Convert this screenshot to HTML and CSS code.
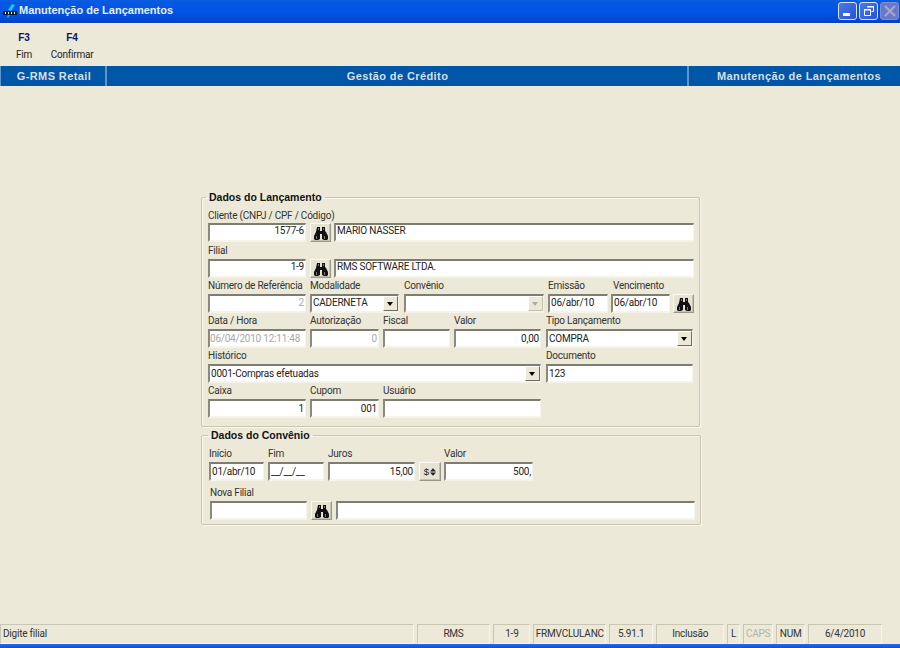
FILE: index.html
```html
<!DOCTYPE html>
<html lang="pt">
<head>
<meta charset="utf-8">
<title>Manutenção de Lançamentos</title>
<link rel="stylesheet" href="styles.css">
</head>
<body>
<svg class="defs" width="0" height="0">
  <symbol id="bino" viewBox="0 0 16 14">
    <path fill="#111" d="M4 1h3v4h2V1h3v4l1 1 2 4v3l-1 1h-3l-2-1V8H7v5l-2 1H2l-1-1v-3l2-4z"/>
    <path fill="#7a7a6e" d="M3 10h1v3H3zM11 10h1v3h-1zM5 2h1v2H5zM10 2h1v2h-1z"/>
  </symbol>
</svg>
<div class="app">
  <header class="titlebar">
    <svg class="appicon" viewBox="0 0 16 16" width="16" height="16">
      <path fill="#16d0d8" d="M10 1l3 1-4 6-3-1z"/>
      <path fill="#0a1a3a" d="M1 8h14v4H1z"/>
      <path fill="#e8f0ff" d="M3 9h1v2H3zM6 9h1v2H6zM9 9h1v2H9zM12 9h1v2h-1z"/>
      <path fill="#16c0d8" d="M6 12l2 0-2 3-1-1z"/>
    </svg>
    <span class="titletext">Manutenção de Lançamentos</span>
    <div class="winbtns">
      <span class="winbtn"><i class="min"></i></span>
      <span class="winbtn"><svg viewBox="0 0 14 14" width="14" height="14"><path fill="none" stroke="#fff" d="M5.500 2.500h6v5h-2M2.500 5.500h6v6h-6z"/><path stroke="#fff" d="M5 3h7M2 6h7"/></svg></span>
      <span class="winbtn off"><svg viewBox="0 0 14 14" width="14" height="14"><path stroke="#a8a8d0" stroke-width="2" d="M2 2l10 10M12 2L2 12"/></svg></span>
    </div>
  </header>

  <nav class="toolbar">
    <div class="tool t1"><b>F3</b><span>Fim</span></div>
    <div class="tool t2"><b>F4</b><span>Confirmar</span></div>
  </nav>

  <div class="banner">
    <div class="b-left">G-RMS Retail</div>
    <div class="b-mid">Gestão de Crédito</div>
    <div class="b-right">Manutenção de Lançamentos</div>
  </div>

  <main class="main">
    <fieldset class="group g1">
      <legend>Dados do Lançamento</legend>
      <div class="row r-first up2">
        <div class="field w98"><label class="lab-down">Cliente (CNPJ / CPF / Código)</label><div class="box right">1577-6</div></div>
        <button class="btn w21"><svg class="ic"><use href="#bino"/></svg></button>
        <div class="field grow m-l"><label></label><div class="box">MARIO NASSER</div></div>
      </div>
      <div class="row up2">
        <div class="field w98"><label>Filial</label><div class="box right">1-9</div></div>
        <button class="btn w21"><svg class="ic"><use href="#bino"/></svg></button>
        <div class="field grow m-l"><label></label><div class="box">RMS SOFTWARE LTDA.</div></div>
      </div>
      <div class="row up1">
        <div class="field w98"><label>Número de Referência</label><div class="box right dim">2</div></div>
        <div class="field w89"><label>Modalidade</label><div class="box sel">CADERNETA<span class="arrow"></span></div></div>
        <div class="field w140 m-a"><label>Convênio</label><div class="box sel"><span class="arrow off"></span></div></div>
        <div class="field w60"><label>Emissão</label><div class="box">06/abr/10</div></div>
        <div class="field w59 m-s"><label class="lab-in">Vencimento</label><div class="box">06/abr/10</div></div>
        <button class="btn w21 m-s"><svg class="ic"><use href="#bino"/></svg></button>
      </div>
      <div class="row">
        <div class="field w98"><label>Data / Hora</label><div class="box dim date">06/04/2010 12:11:48</div></div>
        <div class="field w69"><label>Autorização</label><div class="box right dim">0</div></div>
        <div class="field w67"><label>Fiscal</label><div class="box"></div></div>
        <div class="field w87"><label>Valor</label><div class="box right">0,00</div></div>
        <div class="field w147 m-w"><label>Tipo Lançamento</label><div class="box sel">COMPRA<span class="arrow"></span></div></div>
      </div>
      <div class="row">
        <div class="field w333"><label>Histórico</label><div class="box sel">0001-Compras efetuadas<span class="arrow"></span></div></div>
        <div class="field w147 m-w"><label>Documento</label><div class="box">123</div></div>
      </div>
      <div class="row">
        <div class="field w98"><label>Caixa</label><div class="box right">1</div></div>
        <div class="field w69"><label>Cupom</label><div class="box right">001</div></div>
        <div class="field w158"><label>Usuário</label><div class="box"></div></div>
      </div>
    </fieldset>

    <fieldset class="group g2">
      <legend>Dados do Convênio</legend>
      <div class="row r-first2">
        <div class="field w55"><label>Início</label><div class="box">01/abr/10</div></div>
        <div class="field w56"><label>Fim</label><div class="box">__/__/__</div></div>
        <div class="field w87"><label>Juros</label><div class="box right">15,00</div></div>
        <button class="btn w22 calc">$<svg class="updown" viewBox="0 0 7 9" width="6" height="8"><path fill="#222" d="M3.500 0L7 4H0zM0 5h7L3.500 9z"/></svg></button>
        <div class="field w89 m-t"><label>Valor</label><div class="box right">500,</div></div>
      </div>
      <div class="row r-second2">
        <div class="field w97"><label>Nova Filial</label><div class="box"></div></div>
        <button class="btn w21"><svg class="ic"><use href="#bino"/></svg></button>
        <div class="field grow"><label></label><div class="box"></div></div>
      </div>
    </fieldset>
  </main>

  <footer class="status">
    <div class="pane p-msg">Digite filial</div>
    <div class="pane p-rms">RMS</div>
    <div class="pane p-fil">1-9</div>
    <div class="pane p-frm">FRMVCLULANC</div>
    <div class="pane p-ver">5.91.1</div>
    <div class="pane p-inc">Inclusão</div>
    <div class="pane p-l">L</div>
    <div class="pane p-caps">CAPS</div>
    <div class="pane p-num">NUM</div>
    <div class="pane p-date">6/4/2010</div>
  </footer>
  <div class="bottomedge"></div>
</div>
</body>
</html>
```
FILE: styles.css
```css
* { box-sizing: border-box; }
html, body { margin: 0; padding: 0; }
body { width: 900px; height: 648px; overflow: hidden; background: #ece9d8; font-family: Roboto, "Liberation Sans", Arial, sans-serif; font-size: 10px; letter-spacing: -0.220px; color: #222; }
.defs { display: block; height: 0; }
.app { width: 900px; height: 648px; display: flex; flex-direction: column; }

.titlebar { height: 23px; flex: none; display: flex; align-items: center; padding: 0 1px 0 2px; border-bottom: 1px solid #0a3fc0; background: linear-gradient(#0a5ee0 0, #0458e2 3px, #0055e5 12px, #0146d0 21px, #0a3fc0 23px); }
.appicon { flex: none; margin-right: 1px; margin-top: -1px; }
.titletext { color: #e8eeff; font-family: "Liberation Sans", sans-serif; font-weight: bold; font-size: 11px; letter-spacing: 0; margin-top: -2px; }
.winbtns { margin-left: auto; display: flex; gap: 2px; margin-top: -1px; }
.winbtn { width: 19px; height: 18px; border: 1px solid #d8e4fa; border-radius: 3px; background: linear-gradient(135deg, #4a7ae8, #2a50d8); display: flex; align-items: center; justify-content: center; position: relative; }
.winbtn .min { display: block; width: 7px; height: 3px; background: #fff; margin-top: 8px; margin-right: 2px; }
.winbtn.off { background: #6a78c8; border-color: #7e8cd2; }

.toolbar { height: 43px; flex: none; display: flex; position: relative; border-top: 1px solid #f4f2e8; }
.tool { display: flex; flex-direction: column; align-items: center; width: 48px; padding-top: 8px; }
.tool b { color: #10106a; font-family: "Liberation Sans", sans-serif; font-size: 10px; letter-spacing: 0; line-height: 12px; height: 17px; }
.tool span { line-height: 12px; color: #222; }

.banner { height: 20px; flex: none; display: flex; background: #0057a8; color: #d8dfe8; font-family: "Liberation Sans", sans-serif; font-weight: bold; font-size: 11px; line-height: 20px; text-align: center; letter-spacing: 0.400px; }
.b-left { width: 107px; padding-left: 2px; border-left: 1px solid #5f95cc; border-right: 2px solid #5f95cc; }
.b-mid { width: 580px; padding-left: 1px; }
.b-right { flex: 1; padding-left: 9px; border-left: 2px solid #5f95cc; }

.main { flex: 1; display: flex; flex-direction: column; padding: 105px 0 0 201px; }
.group { margin: 0; padding: 0 0 0 5px; min-width: 0; border: 1px solid #c9c6b4; border-radius: 2px; box-shadow: inset 1px 1px 0 #f8f6ec, 1px 1px 0 #f8f6ec; }
.group legend { margin-left: -2px; padding: 0 3px; height: 12px; font-family: "Liberation Sans", sans-serif; font-weight: bold; font-size: 10.500px; letter-spacing: 0; line-height: 12px; color: #111; }
.g1 { width: 499px; height: 236px; padding-left: 6px; }
.g2 { width: 500px; height: 96px; margin-top: 2px; padding-left: 7px; }
.g2 legend { margin-left: -1px; }

.row { display: flex; gap: 4px; align-items: flex-end; }
.r-first { margin-top: 4px; margin-bottom: 1px; }
.r-first2 { margin-top: 5px; }
.r-second2 { margin-top: 4px; margin-left: 1px; }

.field { display: flex; flex-direction: column; flex: none; }
.field label { height: 16px; line-height: 15px; white-space: nowrap; color: #333; }
.field label.lab-down { line-height: 17px; }
.field label.lab-in { padding-left: 2px; }
.box { height: 19px; line-height: 15px; padding: 0 1px 0 1px; background: #fff; border-style: solid; border-width: 2px 1px 2px 2px; border-color: #7f7d72 #f6f4ea #f6f4ea #8b897e; white-space: nowrap; overflow: hidden; color: #222; }
.up1 .box { line-height: 14px; }
.up2 .box { line-height: 12px; }
.right { text-align: right; }
.dim { color: #a8a8a8; }
.date { padding-left: 0; }
.sel { position: relative; padding-right: 18px; }
.arrow { position: absolute; top: 0; right: 0; width: 15px; height: 15px; background: #ece9d8; border: 1px solid; border-color: #fff #6e6c62 #6e6c62 #fff; }
.arrow::after { content: ""; position: absolute; left: 3px; top: 5px; border-style: solid; border-width: 4px 3.500px 0; border-color: #000 transparent transparent; }
.arrow.off::after { border-top-color: #b0ae9f; }
.arrow.off { border-color: #fff #c0beaf #c0beaf #fff; }

.btn { flex: none; height: 19px; padding: 0; margin: 0; background: #e6e3d3; border: 1px solid; border-color: #fbfaf4 #9a988c #9a988c #fbfaf4; box-shadow: inset -1px -1px 0 #c4c1b0; display: flex; align-items: center; justify-content: center; font-family: "Liberation Sans", sans-serif; font-size: 9.500px; color: #222; }
.ic { width: 16px; height: 14px; }
.calc { gap: 1px; margin-right: -1px; }
.updown { display: block; }

.grow { flex: 1; margin-right: 5px; }
.m-a { margin-left: 1px; }
.m-l { margin-left: -1px; }
.m-s { margin-left: -1px; }
.m-w { margin-left: 1px; }
.m-t { margin-left: 0; }
.w21 { width: 21px; } .w22 { width: 22px; }
.w55 { width: 55px; } .w56 { width: 56px; } .w59 { width: 59px; } .w60 { width: 60px; }
.w67 { width: 67px; } .w69 { width: 69px; } .w87 { width: 87px; } .w89 { width: 89px; }
.w97 { width: 97px; } .w98 { width: 98px; } .w140 { width: 140px; } .w147 { width: 147px; }
.w158 { width: 158px; } .w333 { width: 333px; }

.status { height: 20px; flex: none; display: flex; gap: 3px; margin-top: auto; padding-right: 18px; }
.pane { line-height: 18px; text-align: center; color: #333; border: 1px solid; border-color: #c9c6b4 #f8f6ec #f8f6ec #c9c6b4; white-space: nowrap; overflow: hidden; }
.p-msg { width: 414px; text-align: left; padding-left: 2px; }
.p-rms { width: 74px; } .p-fil { width: 37px; } .p-frm { width: 73px; } .p-ver { width: 44px; }
.p-inc { width: 68px; } .p-l { width: 13px; } .p-caps { width: 30px; color: #b4b2a4; } .p-num { width: 29px; } .p-date { width: 74px; }
.bottomedge { height: 4px; flex: none; background: linear-gradient(#2a6ae0, #0a50d8); }
```
